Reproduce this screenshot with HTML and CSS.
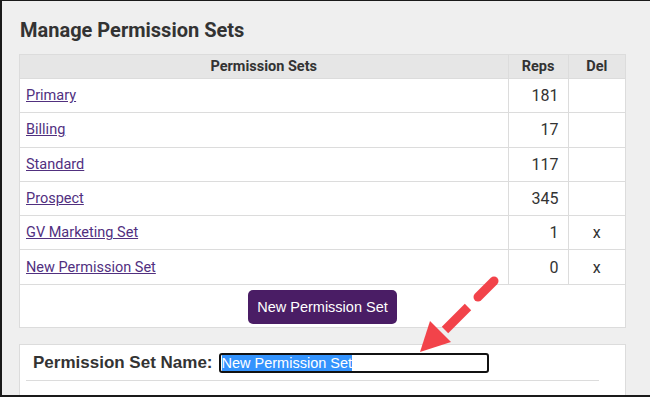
FILE: index.html
```html
<!DOCTYPE html>
<html lang="en">
<head>
    <meta charset="UTF-8">
    <meta name="viewport" content="width=device-width, initial-scale=1.0">
    <title>Manage Permission Sets</title>
    <link rel="stylesheet" href="styles.css">
</head>
<body>

    <div class="frame">
        <h1 class="title">Manage Permission Sets</h1>

        <div class="sets-box">
            <table class="sets">
                <colgroup>
                    <col>
                    <col class="col-reps">
                    <col class="col-del">
                </colgroup>
                <thead>
                    <tr>
                        <th>Permission Sets</th>
                        <th>Reps</th>
                        <th>Del</th>
                    </tr>
                </thead>
                <tbody>
                    <tr><td><a href="#">Primary</a></td><td class="num">181</td><td class="del"></td></tr>
                    <tr><td><a href="#">Billing</a></td><td class="num">17</td><td class="del"></td></tr>
                    <tr><td><a href="#">Standard</a></td><td class="num">117</td><td class="del"></td></tr>
                    <tr><td><a href="#">Prospect</a></td><td class="num">345</td><td class="del"></td></tr>
                    <tr><td><a href="#">GV Marketing Set</a></td><td class="num">1</td><td class="del">x</td></tr>
                    <tr><td><a href="#">New Permission Set</a></td><td class="num">0</td><td class="del">x</td></tr>
                </tbody>
            </table>
            <div class="actions">
                <button class="btn" type="button">New Permission Set</button>
            </div>
        </div>

        <div class="name-panel">
            <div class="name-row">
                <label class="name-label">Permission Set Name:</label>
                <div class="name-input"><span class="selected">New Permission Set</span></div>
            </div>
        </div>

        <!-- callout arrow drawn over the page -->
        <svg class="callout" width="650" height="397" viewBox="0 0 650 397">
            <line x1="494" y1="281" x2="478" y2="297" stroke="#f2434a" stroke-width="9" stroke-linecap="round"/>
            <line x1="468" y1="307" x2="445" y2="330" stroke="#f2434a" stroke-width="9"/>
            <polygon points="420,352 430,321 451,342" fill="#f2434a"/>
        </svg>
    </div>

</body>
</html>
```

FILE: styles.css
```css
body {
    margin: 0;
    padding: 0;
    background-color: #efefef;
    font-family: Roboto, "Liberation Sans", Arial, sans-serif;
    color: #333;
}

.frame {
    position: relative;
    height: 397px;
    box-sizing: border-box;
    border-top: 1px solid #1a1a1a;
    border-left: 2px solid #1a1a1a;
    border-bottom: 2px solid #1a1a1a;
    padding: 19px 24px 0 17px;
    overflow: hidden;
}

.title {
    margin: 0 0 13px 1px;
    font-size: 20px;
    line-height: 21px;
    font-weight: bold;
    color: #333;
}

.sets-box {
    background-color: #fff;
    border: 1px solid #dcdcdc;
}

.sets {
    width: 100%;
    border-collapse: collapse;
    table-layout: fixed;
}

.sets .col-reps {
    width: 60px;
}

.sets .col-del {
    width: 57px;
}

.sets th,
.sets td {
    border-bottom: 1px solid #dcdcdc;
    border-left: 1px solid #dcdcdc;
    padding: 0;
}

.sets th:first-child,
.sets td:first-child {
    border-left: none;
}

.sets th {
    height: 23px;
    background-color: #e6e6e6;
    font-size: 14.5px;
    font-weight: bold;
    text-align: center;
    color: #333;
}

.sets td {
    height: 33.3px;
    font-size: 14.5px;
    vertical-align: middle;
}

.sets td:first-child {
    padding-left: 6px;
}

.sets td a {
    color: #51307f;
}

.sets td.num {
    font-size: 16px;
    text-align: right;
    padding-right: 9px;
}

.sets td.del {
    font-size: 16px;
    text-align: center;
}

.actions {
    text-align: center;
    padding: 5px 0 3px;
}

.btn {
    height: 34px;
    padding: 0 9px;
    border: none;
    border-radius: 5px;
    background-color: #4a1d65;
    color: #fff;
    font-family: "Liberation Sans", Arial, sans-serif;
    font-size: 14.5px;
    cursor: pointer;
}

.name-panel {
    margin-top: 16px;
    height: 60px;
    background-color: #fff;
    border: 1px solid #dcdcdc;
    padding: 8px 26px 0 6px;
}

.name-row {
    display: flex;
    align-items: center;
    gap: 6px;
    padding: 0 0 7px 7px;
    border-bottom: 1px solid #dcdcdc;
}

.name-label {
    font-family: "Liberation Sans", Arial, sans-serif;
    font-size: 17px;
    font-weight: bold;
    color: #333;
}

.name-input {
    width: 270px;
    height: 20px;
    box-sizing: border-box;
    border: 2px solid #111;
    border-radius: 3px;
    padding-left: 1px;
    display: flex;
    align-items: center;
}

.name-input .selected {
    background-color: #3393fd;
    color: #fff;
    font-family: "Liberation Sans", Arial, sans-serif;
    font-size: 14.5px;
    line-height: 16px;
}

.callout {
    position: absolute;
    left: -2px;
    top: -1px;
    pointer-events: none;
}
```
